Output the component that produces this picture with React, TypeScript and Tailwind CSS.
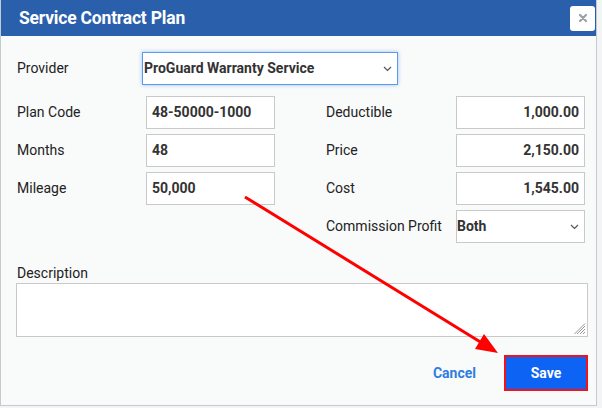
import React from "react";

const Field = ({ value, right }: { value: string; right?: boolean }) => (
  <div
    className={`w-[129px] h-[33px] bg-white border border-[#c9c9c9] flex items-center px-[5px] text-[14px] font-bold text-[#333] ${right ? "justify-end" : ""}`}
  >
    {value}
  </div>
);

const Chevron = () => (
  <svg width="9" height="6" viewBox="0 0 9 6" className="shrink-0">
    <path d="M1 1 L4.5 4.5 L8 1" fill="none" stroke="#555" strokeWidth="1.2" />
  </svg>
);

export default function App() {
  return (
    <div className="w-[602px] h-[408px] bg-[#f3f4f5] relative" style={{ fontFamily: "Roboto, 'Liberation Sans', sans-serif" }}>
      <div className="w-[597px] h-[406px] bg-[#f9fafa] border-l border-r border-b border-[#c4cad1] flex flex-col">
        <div className="h-[36px] bg-[#2a5fab] flex items-center justify-between pl-[18px] pr-[1px] shrink-0">
          <span className="text-white font-bold text-[17.5px] tracking-[-0.2px]">Service Contract Plan</span>
          <div className="w-[25px] h-[25px] bg-white rounded-[3px] flex items-center justify-center">
            <svg width="10" height="10" viewBox="0 0 10 10">
              <path d="M2 2 L8 8 M8 2 L2 8" stroke="#9aa0a6" strokeWidth="2.2" strokeLinecap="round" />
            </svg>
          </div>
        </div>

        <div className="flex flex-col pl-[15px] pt-[16px] text-[14px] text-[#222]">
          <div className="flex items-center h-[33px]">
            <span className="w-[126px] pl-[1px]">Provider</span>
            <div className="w-[256px] h-[33px] bg-white border border-[#5b9be8] shadow-[0_0_4px_#9cc3f2] flex items-center justify-between pl-[1px] pr-[5px] font-bold text-[#333]">
              <span>ProGuard Warranty Service</span>
              <Chevron />
            </div>
          </div>

          <div className="flex mt-[11px]">
            <div className="flex flex-col gap-[5px]">
              <div className="flex items-center">
                <span className="w-[130px] pl-[1px]">Plan Code</span>
                <Field value="48-50000-1000" />
              </div>
              <div className="flex items-center">
                <span className="w-[130px] pl-[1px]">Months</span>
                <Field value="48" />
              </div>
              <div className="flex items-center">
                <span className="w-[130px] pl-[1px]">Mileage</span>
                <Field value="50,000" />
              </div>
            </div>
            <div className="flex flex-col gap-[5px] ml-[51px]">
              <div className="flex items-center">
                <span className="w-[130px]">Deductible</span>
                <Field value="1,000.00" right />
              </div>
              <div className="flex items-center">
                <span className="w-[130px]">Price</span>
                <Field value="2,150.00" right />
              </div>
              <div className="flex items-center">
                <span className="w-[130px]">Cost</span>
                <Field value="1,545.00" right />
              </div>
              <div className="flex items-center">
                <span className="w-[130px]">Commission Profit</span>
                <div className="w-[129px] h-[33px] bg-white border border-[#c9c9c9] flex items-center justify-between pl-[0px] pr-[5px] font-bold text-[#333]">
                  <span>Both</span>
                  <Chevron />
                </div>
              </div>
            </div>
          </div>

          <div className="mt-[21px] pl-[1px] leading-[18px]">Description</div>
          <div className="mt-[1px] w-[572px] h-[54px] bg-white border border-[#c9c9c9] relative">
            <svg width="12" height="12" viewBox="0 0 12 12" className="absolute right-[1px] bottom-[1px]">
              <path d="M11 3 L3 11 M11 6 L6 11 M11 9 L9 11 M11 0.5 L0.5 11" stroke="#888" strokeWidth="0.9" />
            </svg>
          </div>

          <div className="flex items-center justify-end mt-[18px] w-[572px]">
            <span className="text-[#2f7de1] font-bold text-[14px] mr-[28px]">Cancel</span>
            <div className="w-[84px] h-[36px] bg-[#0d63f3] border-2 border-[#f2131a] flex items-center justify-center text-white font-bold text-[14px]">
              Save
            </div>
          </div>
        </div>
      </div>

      <svg className="absolute left-0 top-0 pointer-events-none" width="602" height="408">
        <line x1="245" y1="197" x2="482" y2="343" stroke="#ff0000" strokeWidth="3" />
        <polygon points="498,353 475,349 484,334" fill="#ff0000" />
      </svg>
    </div>
  );
}
